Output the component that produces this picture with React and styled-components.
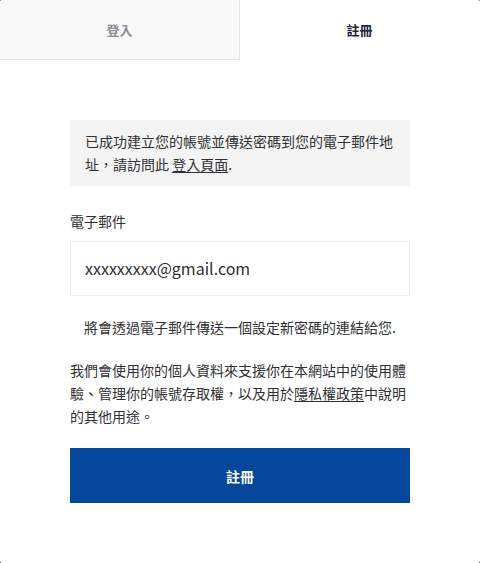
import React from "react";
import styled, { createGlobalStyle } from "styled-components";

const Global = createGlobalStyle`
  html, body { margin: 0; padding: 0; background: #2a2a2a; }
  body { font-family: "Noto Sans CJK TC", "Noto Sans", sans-serif; }
  * { box-sizing: border-box; }
`;

const Dialog = styled.div`
  width: 480px;
  height: 563px;
  background: #fff;
  border-radius: 2px;
  overflow: hidden;
  display: flex;
  flex-direction: column;
`;

const Tabs = styled.div`
  display: flex;
  height: 60px;
`;

const Tab = styled.div`
  flex: 1;
  display: flex;
  align-items: center;
  justify-content: center;
  font-size: 13px;
  font-weight: 700;
  color: ${(p) => (p.$active ? "#1d2133" : "#8a8d91")};
  background: ${(p) => (p.$active ? "#fff" : "#f8f8f8")};
  border-bottom: 1px solid ${(p) => (p.$active ? "transparent" : "#e6e6e6")};
  border-right: 1px solid ${(p) => (p.$active ? "transparent" : "#e6e6e6")};
`;

const Body = styled.div`
  padding: 60px 70px 0;
  display: flex;
  flex-direction: column;
  color: #2f3033;
  font-size: 14px;
  line-height: 23px;
`;

const Notice = styled.div`
  background: #f4f4f4;
  border-radius: 2px;
  padding: 10px 15px;
`;

const Link = styled.a`
  color: inherit;
  text-decoration: underline;
  text-underline-offset: 2px;
`;

const Label = styled.label`
  margin-top: 24px;
  display: block;
`;

const Input = styled.div`
  margin-top: 8px;
  height: 55px;
  border: 1px solid #ececec;
  display: flex;
  align-items: center;
  padding: 0 14px;
  font-size: 16px;
  color: #2f3033;
`;

const Note = styled.p`
  margin: 20px 0 0;
  text-align: center;
`;

const Privacy = styled.p`
  margin: 20px 0 0;
`;

const Submit = styled.button`
  margin-top: 20px;
  height: 55px;
  border: none;
  border-radius: 0;
  background: #05479b;
  color: #fff;
  font-family: inherit;
  font-size: 14px;
  font-weight: 700;
  cursor: pointer;
`;

export default function App() {
  return (
    <>
      <Global />
      <Dialog>
        <Tabs>
          <Tab>登入</Tab>
          <Tab $active>註冊</Tab>
        </Tabs>
        <Body>
          <Notice>
            已成功建立您的帳號並傳送密碼到您的電子郵件地址，請訪問此 <Link href="#">登入頁面</Link>.
          </Notice>
          <Label>電子郵件</Label>
          <Input>xxxxxxxxx@gmail.com</Input>
          <Note>將會透過電子郵件傳送一個設定新密碼的連結給您.</Note>
          <Privacy>
            我們會使用你的個人資料來支援你在本網站中的使用體驗、管理你的帳號存取權，以及用於<Link href="#">隱私權政策</Link>中說明的其他用途。
          </Privacy>
          <Submit>註冊</Submit>
        </Body>
      </Dialog>
    </>
  );
}
